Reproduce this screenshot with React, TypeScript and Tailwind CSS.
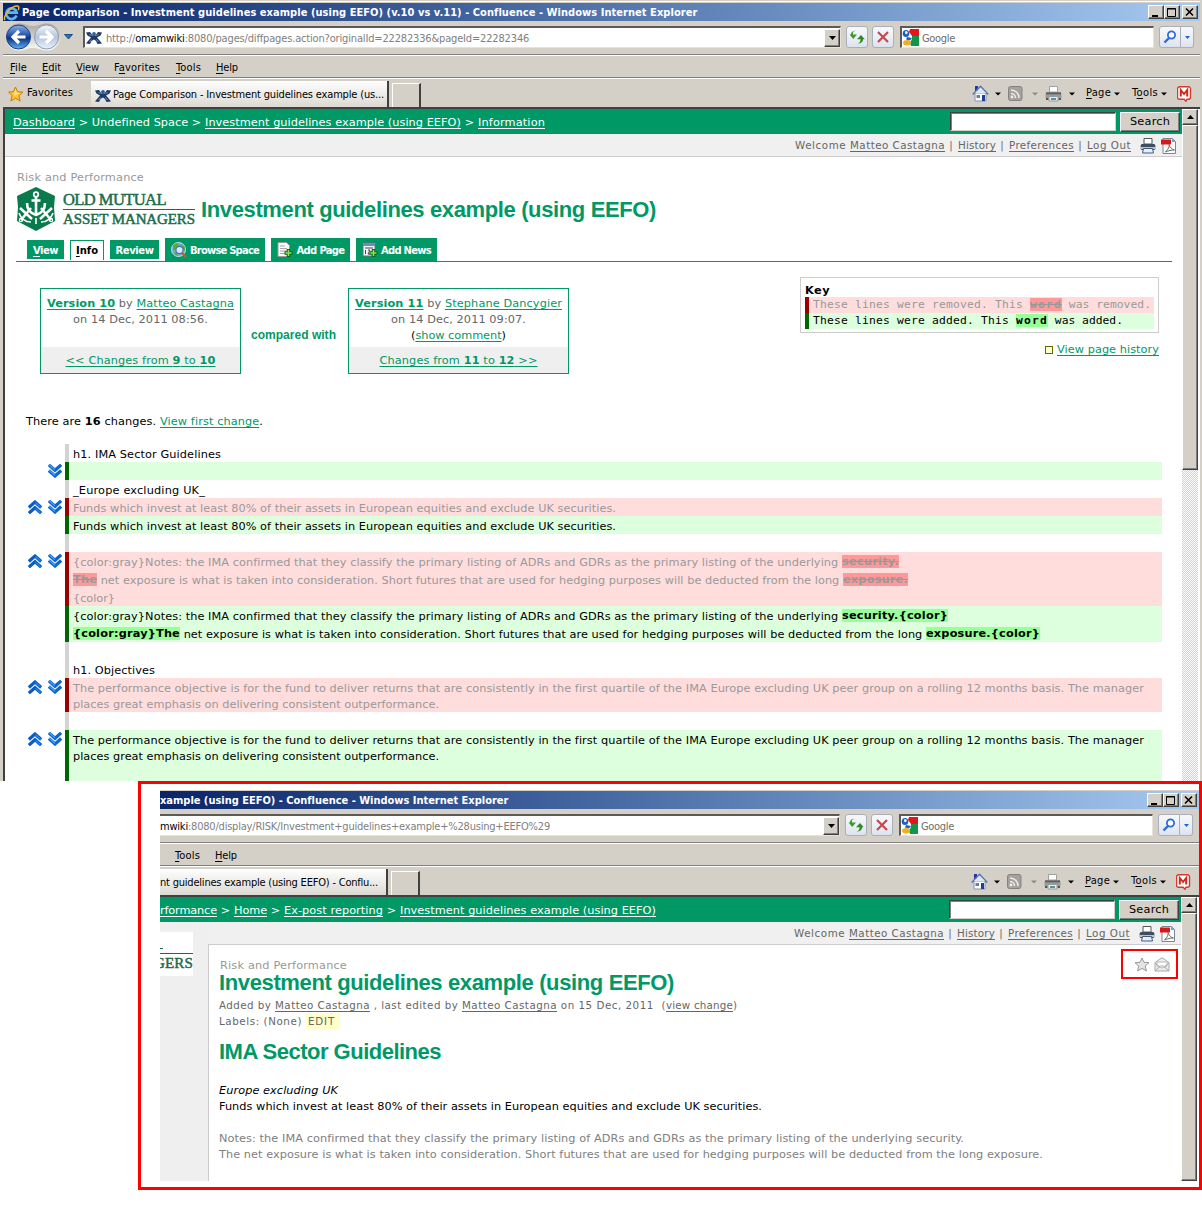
import { useLayoutEffect, useRef } from 'react';
import type { ReactNode } from 'react';
import clsx from 'clsx';

/** Text run tracked so that it fills exactly `w` pixels. */
function Fit({ w, className, children }: { w: number; className?: string; children: ReactNode }) {
  const ref = useRef<HTMLSpanElement>(null);
  useLayoutEffect(() => {
    const el = ref.current;
    if (!el) return;
    el.style.letterSpacing = '0px';
    const natural = el.getBoundingClientRect().width;
    const n = (el.textContent || '').length || 1;
    el.style.letterSpacing = `${(w - natural) / n}px`;
  }, [w]);
  return (
    <span ref={ref} className={clsx('inline-block shrink-0 whitespace-pre', className)}>
      {children}
    </span>
  );
}

const U = ({ children }: { children: ReactNode }) => <span className="underline underline-offset-2">{children}</span>;

/* ---------- icons ---------- */

function IeLogo() {
  return (
    <svg width="17" height="18" viewBox="0 0 17 18">
      <path d="M13.5 11.5A5.3 5.3 0 1 1 13.7 8.6H5" fill="none" stroke="#5db4f0" strokeWidth="2.7" />
      <path d="M2 16C-.5 13 8 1.500 14.500 2c2 .5 1.500 3 .5 4" fill="none" stroke="#f0b93a" strokeWidth="1.400" />
    </svg>
  );
}

function NavButtons() {
  return (
    <svg width="58" height="28" viewBox="0 0 58 28">
      <defs>
        <linearGradient id="nb" x1="0" y1="0" x2="0" y2="1">
          <stop offset="0" stopColor="#8fb2e6" />
          <stop offset=".45" stopColor="#1f4fae" />
          <stop offset=".55" stopColor="#0d3286" />
          <stop offset="1" stopColor="#5fb4f5" />
        </linearGradient>
        <linearGradient id="nf" x1="0" y1="0" x2="0" y2="1">
          <stop offset="0" stopColor="#f4f7fb" />
          <stop offset=".5" stopColor="#b4c4dc" />
          <stop offset="1" stopColor="#eaf4ff" />
        </linearGradient>
        <linearGradient id="np" x1="0" y1="0" x2="0" y2="1">
          <stop offset="0" stopColor="#a9a7a2" />
          <stop offset="1" stopColor="#fbfbfa" />
        </linearGradient>
      </defs>
      <path d="M14 .5C20 .500 22 3 28 3S36 .500 42 .500a13.500 13.500 0 0 1 0 27C36 27.500 34 25 28 25s-8 2.500-14 2.500a13.500 13.500 0 0 1 0-27z" fill="url(#np)" />
      <circle cx="13.500" cy="14" r="12" fill="url(#nb)" stroke="#1c3f80" />
      <circle cx="41.500" cy="14" r="12" fill="url(#nf)" stroke="#8f9bb0" />
      <path d="M20.500 14h-12M14 8l-6 6 6 6" fill="none" stroke="#fff" strokeWidth="3.200" />
      <path d="M34.500 14h12M41 8l6 6-6 6" fill="none" stroke="#fff" strokeWidth="3.200" />
    </svg>
  );
}

function SiteIcon() {
  return (
    <svg width="16" height="14" viewBox="0 0 16 14" className="shrink-0">
      <path d="M0 1.500L4 1l2.500 3.500h3L12 1l4 .5-1.500 3-3.500 2 3 3.500 2 2.500-4.500.5-1.500-3L8 8.500 5.500 10 4 13l-4-.5L2 10l3-3.500-3.500-2z" fill="#1d3a66" />
      <circle cx="8" cy="3" r="1.900" fill="#2f5c98" />
      <path d="M3.500 3l2 2M12.500 3l-2 2M3.500 11l2-2.500M12.500 11l-2-2.500" stroke="#8ea9cc" strokeWidth=".8" />
    </svg>
  );
}

function GoogleIcon() {
  return (
    <svg width="17" height="17" viewBox="0 0 17 17">
      <path d="M0 0h17v17H0z" fill="#fff" />
      <path d="M8 0h9v7H10L7 3z" fill="#e8141b" />
      <path d="M10 7h7v10H9l-1-3 2-4z" fill="#12964a" />
      <ellipse cx="4" cy="4.500" rx="3.300" ry="3.600" fill="#1e5fc4" />
      <ellipse cx="4.300" cy="3.600" rx="1.300" ry="1.700" fill="#fff" />
      <path d="M5 8l5 1-2 2.500-4-1z" fill="#1e5fc4" />
      <ellipse cx="5" cy="13.700" rx="4" ry="2.700" fill="#f2b01e" />
    </svg>
  );
}

function StarIcon() {
  return (
    <svg width="16" height="16" viewBox="0 0 16 16">
      <path d="M7.500 1l2 4.700 5.500.4-4.200 3.600L12.200 15l-4.700-2.800L2.800 15l1.400-5.300L.6 6.100l4.900-.4z" fill="#ffc62e" stroke="#c97a10" />
      <path d="M7.500 3l1.300 3.700 3.500.3-6.500 3z" fill="#ffe98a" />
    </svg>
  );
}

function HomeIcon() {
  return (
    <svg width="17" height="17" viewBox="0 0 17 17">
      <path d="M3 1h3v5H3z" fill="#2430b8" />
      <path d="M3 8h11v8H3z" fill="#fff" stroke="#8494ac" />
      <path d="M.7 9.500L8.500 1.500l7.800 8" fill="none" stroke="#5b76a8" strokeWidth="1.600" />
      <path d="M3 8l5.500-5.500L14 8z" fill="#dbe8f8" />
      <path d="M10 10h3v6h-3z" fill="#1c3f96" />
      <path d="M4.500 10H8v3H4.500z" fill="#6a7d9e" />
    </svg>
  );
}

function RssIcon() {
  return (
    <svg width="15" height="15" viewBox="0 0 15 15">
      <rect x=".5" y=".5" width="13.500" height="14" rx="2" fill="#a5a29d" stroke="#85827d" />
      <circle cx="4" cy="11" r="1.400" fill="#eee" />
      <path d="M3 7.500a4.500 4.500 0 0 1 4.500 4.500M3 4a8 8 0 0 1 8 8" fill="none" stroke="#eee" strokeWidth="1.500" />
    </svg>
  );
}

function PrinterIcon() {
  return (
    <svg width="17" height="16" viewBox="0 0 17 16">
      <path d="M4.500.5h8V6h-8z" fill="#fff" stroke="#a0a0a0" />
      <path d="M1.500 6h14l1 2v4H.5V8z" fill="#9a9a9a" />
      <path d="M1 6.500h15v1.800H1z" fill="#5e5e5e" />
      <path d="M1 12h2.500v2H1zM13.500 12H16v2h-2.500z" fill="#555" />
      <path d="M4 10.500h9V15H4z" fill="#e9eef4" stroke="#9b9b9b" />
      <path d="M6 12h3v2H6z" fill="#49a06b" />
      <path d="M9 12h2v2H9z" fill="#5a87cf" />
    </svg>
  );
}

function MIcon() {
  return (
    <svg width="15" height="16" viewBox="0 0 15 16">
      <path d="M2.500.8h9a2 2 0 0 1 2 2v8.500a2 2 0 0 1-2 2H10l-1 2-1.800-2H2.500a2 2 0 0 1-2-2V2.800a2 2 0 0 1 2-2z" fill="#fff" stroke="#d23a2a" strokeWidth="1.400" />
      <path d="M3.800 10.500V4l3.200 4 3.200-4v6.500" fill="none" stroke="#cf2a1d" strokeWidth="2" />
    </svg>
  );
}

function PagePrinter() {
  return (
    <svg width="16" height="16" viewBox="0 0 16 16">
      <path d="M4 .5h8V6H4z" fill="#fff" stroke="#555" />
      <rect x=".7" y="6" width="14.600" height="6" rx="1.500" fill="#3f4d5e" />
      <path d="M1 9h14v2H1z" fill="#b6c4d4" />
      <path d="M3.500 10.500h9l1 4.500h-11z" fill="#e6effa" stroke="#405a80" />
    </svg>
  );
}

function PdfIcon() {
  return (
    <svg width="16" height="16" viewBox="0 0 16 16">
      <path d="M2 .5h9.500l3 3V15.500H2z" fill="#fff" stroke="#7c8794" />
      <path d="M11 .5v3.500h3.500z" fill="#6aa3d0" />
      <path d="M0 1.500h10V6.500H0z" fill="#d81818" />
      <path d="M4.500 14c3-3 4-5 3.500-7.500 1 3 3 5 5.500 5.500-3 0-6 .7-9 2z" fill="none" stroke="#6c6c6c" />
    </svg>
  );
}

const Caret = ({ light = false }: { light?: boolean }) => (
  <svg width="6" height="4" viewBox="0 0 6 4" className="shrink-0">
    <path d="M0 .5h6L3 3.500z" fill={light ? '#8d8a84' : '#000'} />
  </svg>
);

function Crest() {
  return (
    <svg width="40" height="44" viewBox="0 0 40 44" className="shrink-0">
      <path d="M20 0l19 9-1 11 1 14-19 10L1 34l1-14L1 9z" fill="#087a4c" />
      <g fill="none" stroke="#fff">
        <circle cx="20" cy="7.500" r="2.300" strokeWidth="1.700" />
        <path d="M20 10v17M15.500 13.500h9" strokeWidth="2.600" />
        <path d="M11 16c0 7 4 10.500 9 12 5-1.500 9-5 9-12" strokeWidth="2.600" />
        <path d="M4 21l12 11M15 21L5 33M36 21L24 32M25 21l10 12" strokeWidth="2.500" />
        <path d="M3 26c2 6 7 9 12 9M37 26c-2 6-7 9-12 9M20 31v6" strokeWidth="1.600" />
        <circle cx="5" cy="33" r="1.600" strokeWidth="1.200" />
        <circle cx="35" cy="33" r="1.600" strokeWidth="1.200" />
      </g>
    </svg>
  );
}

const Up = () => (
  <svg width="14" height="14" viewBox="0 0 14 14">
    <path d="M.8 7.500L7 2l6.200 5.500M.8 13.200L7 7.700l6.200 5.500" fill="none" stroke="#0d5cc2" strokeWidth="3.200" />
    <path d="M7.500 2.500l5 4.500M7.500 8.200l5 4.500" fill="none" stroke="#1c86ea" strokeWidth="1.500" />
  </svg>
);
const Down = () => (
  <svg width="14" height="14" viewBox="0 0 14 14">
    <path d="M.8.8L7 6.300 13.200.8M.8 6.500L7 12l6.200-5.500" fill="none" stroke="#0d66d0" strokeWidth="3.200" />
    <path d="M1 .5L7 5.800M1 6.200l6 5.300" fill="none" stroke="#4aa0f2" strokeWidth="1.100" />
  </svg>
);

function BrowseIcon() {
  return (
    <svg width="16" height="16" viewBox="0 0 16 16">
      <circle cx="7.500" cy="7.500" r="7" fill="#7ba6dd" stroke="#c8dcf2" />
      <path d="M2 3l4-2 2 2-3 4-3 1zM10 2l4 3v4l-3-2zM3 10l3 1 1 3-3-1z" fill="#5ca83a" />
      <circle cx="8.500" cy="8" r="3.600" fill="#d6eafc" stroke="#3f6fb5" strokeWidth="1.200" />
      <path d="M11 11l4 4" stroke="#b5622a" strokeWidth="2.200" />
    </svg>
  );
}
function DocPlus({ news = false }: { news?: boolean }) {
  return (
    <svg width="16" height="16" viewBox="0 0 16 16">
      {news ? (
        <>
          <path d="M1 1h12v13H1z" fill="#f2f5fa" stroke="#5f7286" />
          <path d="M1 1h12v3H1z" fill="#6f8db5" />
          <path d="M3 6h8M3.500 8v4M6 8h2l-2 4h2" fill="none" stroke="#444" />
        </>
      ) : (
        <>
          <path d="M1 .5h8.500l3 3v11H1z" fill="#fafafa" stroke="#9a9a9a" />
          <path d="M3 4h5M3 6.500h7M3 9h7M3 11.500h5" stroke="#a8a8a8" />
        </>
      )}
      <path d="M11.500 7v8M7.500 11h8" stroke="#0b6b10" strokeWidth="3.600" />
      <path d="M11.500 8v6M8.500 11h6" stroke="#8ee05a" strokeWidth="1.500" />
    </svg>
  );
}

/* ---------- browser chrome ---------- */

const bevel = 'border border-t-white border-l-white border-r-[#404040] border-b-[#404040] bg-[#d4d0c8]';
const ctl = clsx(bevel, 'flex h-[14px] w-4 items-center justify-center shadow-[inset_-1px_-1px_0_#808080]');

function TitleBar({ children }: { children: ReactNode }) {
  return (
    <div className="flex h-[18px] items-center justify-between bg-linear-to-r from-[#0a246a] to-[#a6caf0] pr-0.5 text-[11px] leading-[18px] font-bold text-white">
      <div className="flex items-center pt-px">{children}</div>
      <div className="flex">
        <div className={ctl}>
          <svg width="12" height="11"><path d="M2 8h6v2H2z" /></svg>
        </div>
        <div className={ctl}>
          <svg width="12" height="11"><path d="M1.500 1.500h8v8h-8zM1 2h9" fill="none" stroke="#000" /></svg>
        </div>
        <div className={clsx(ctl, 'ml-0.5')}>
          <svg width="12" height="11"><path d="M2 1.500l7 7M9 1.500l-7 7" stroke="#000" strokeWidth="1.600" /></svg>
        </div>
      </div>
    </div>
  );
}

const softBtn = 'flex h-[22px] items-center justify-center rounded-[3px] border border-[#a9afbb] bg-linear-to-b from-[#f6f8fb] via-[#eceff5] to-[#dde3ee]';
const sunkenY = 'flex h-[22px] items-center border-t-2 border-t-[#5c5a57] border-r border-b border-r-[#e6e3dd] border-b-[#e6e3dd] bg-white';
const sunkenLeft = 'border-l-2 border-l-[#5c5a57]';

function AddressRow({ left, children }: { left?: ReactNode; children: ReactNode }) {
  return (
    <div className="flex h-[33px] items-center pr-1.5 pb-px text-[11px]">
      {left}
      <div className={clsx(sunkenY, 'min-w-0 flex-1', left && sunkenLeft)}>
        {children}
        <div className={clsx(bevel, 'ml-auto flex h-[18px] w-4 shrink-0 items-center justify-center shadow-[inset_-1px_-1px_0_#808080]')}>
          <svg width="7" height="4"><path d="M0 0h7L3.500 4z" /></svg>
        </div>
      </div>
      <div className={clsx(softBtn, 'ml-[5px] w-[22px]')}>
        <svg width="16" height="14" viewBox="0 0 16 14">
          <path d="M4 2v2.500h4L4.200 9 .5 4.500H2C2 2 3.500 1 7.500.5 5 1.300 4.200 1.800 4 2z" fill="#3d9a2b" />
          <path d="M12 5l3.800 4.300H14c0 2.500-1.500 4-5.500 4.400 2.500-1 3-2 3-4.400H8z" fill="#2f8a1f" />
        </svg>
      </div>
      <div className={clsx(softBtn, 'ml-1 w-[22px]')}>
        <svg width="12" height="12"><path d="M1 1l10 10M11 1L1 11" stroke="#c4484c" strokeWidth="2.200" /></svg>
      </div>
      <div className={clsx(sunkenY, sunkenLeft, 'ml-1.5 w-[254px]')}>
        <GoogleIcon />
        <Fit w={33} className="mt-[3px] ml-[3px] text-[#6d6d6d]">Google</Fit>
      </div>
      <div className={clsx(softBtn, 'ml-[5px] w-[22px] rounded-r-none')}>
        <svg width="14" height="14"><circle cx="8.500" cy="5" r="3.600" fill="#fff" stroke="#2a6be0" strokeWidth="1.800" /><path d="M6 8l-4.500 4.500" stroke="#2a6be0" strokeWidth="2.400" /></svg>
      </div>
      <div className={clsx(softBtn, 'w-[13px] rounded-l-none border-l-0')}>
        <svg width="5" height="3"><path d="M0 0h5L2.500 3z" fill="#1c62d8" /></svg>
      </div>
    </div>
  );
}

function MenuRow({ children }: { children: ReactNode }) {
  return (
    <div className="flex h-6 items-center border-t border-b border-[#808080] pt-[3px] text-[11px] leading-[18px] shadow-[inset_0_1px_0_#fff,0_1px_0_#fff]">
      {children}
    </div>
  );
}

function TabRow({ children }: { children: ReactNode }) {
  return (
    <div className="flex h-[29px] items-end justify-between pr-2 text-[11px]">
      {children}
      <div className="flex h-[29px] items-center pt-0.5">
        <HomeIcon />
        <span className="ml-1.5 flex"><Caret /></span>
        <span className="ml-[7px] flex"><RssIcon /></span>
        <span className="ml-[9px] flex"><Caret light /></span>
        <span className="ml-[7px] flex"><PrinterIcon /></span>
        <span className="ml-[7px] flex"><Caret /></span>
        <Fit w={25} className="ml-[11px]"><U>P</U>age</Fit>
        <span className="ml-[3px] flex"><Caret /></span>
        <Fit w={26} className="ml-3">T<U>o</U>ols</Fit>
        <span className="ml-[3px] flex"><Caret /></span>
        <span className="ml-2.5 flex"><MIcon /></span>
      </div>
    </div>
  );
}

const EmptyTab = () => <div className="ml-[3px] h-6 w-[29px] border-t border-r-2 border-l border-t-white border-r-[#404040] border-l-white" />;

function Crumbs({ children }: { children: ReactNode }) {
  return (
    <div className="flex h-[25px] shrink-0 items-center bg-[#009966] pt-0.5 pr-0.5 font-[DejaVu_Sans,sans-serif] text-[11.3px] leading-[23px] text-white">
      {children}
      <div className="-mt-0.5 ml-auto h-[19px] w-[166px] border border-t-[#404040] border-r-[#d4d0c8] border-b-[#d4d0c8] border-l-[#404040] bg-white shadow-[inset_1px_1px_0_#808080]" />
      <div className={clsx(bevel, '-mt-0.5 ml-1 flex h-5 w-[60px] items-center justify-center text-black shadow-[inset_-1px_-1px_0_#808080]')}>
        <Fit w={40} className="leading-[18px]">Search</Fit>
      </div>
    </div>
  );
}

function UserBar() {
  return (
    <div className="flex h-[23px] shrink-0 items-center justify-end border-b border-[#cccccc] bg-[#f0f0f0] pt-px pr-[5px] text-[10.3px] leading-[21px] text-[#666666]">
      <Fit w={55}>{'Welcome '}</Fit>
      <Fit w={95} className="underline underline-offset-2">Matteo Castagna</Fit>
      <Fit w={13}>{' | '}</Fit>
      <Fit w={38} className="underline underline-offset-2">History</Fit>
      <Fit w={13}>{' | '}</Fit>
      <Fit w={65} className="underline underline-offset-2">Preferences</Fit>
      <Fit w={13}>{' | '}</Fit>
      <Fit w={44} className="underline underline-offset-2">Log Out</Fit>
      <span className="ml-[9px] flex"><PagePrinter /></span>
      <span className="ml-[5px] flex"><PdfIcon /></span>
    </div>
  );
}

function Scrollbar({ thumb }: { thumb: string }) {
  return (
    <div className="flex w-4 shrink-0 flex-col bg-[conic-gradient(#fff_25%,#d4d0c8_0_50%,#fff_0_75%,#d4d0c8_0)] bg-size-[2px_2px]">
      <div className={clsx(bevel, 'flex h-4 items-center justify-center shadow-[inset_-1px_-1px_0_#808080]')}>
        <svg width="7" height="4"><path d="M0 4h7L3.500 0z" /></svg>
      </div>
      <div className={clsx(bevel, 'shadow-[inset_-1px_-1px_0_#808080]', thumb)} />
    </div>
  );
}

/* ---------- diff ---------- */

type Kind = 'same' | 'del' | 'add';
const bar: Record<Kind, string> = {
  same: 'border-[#d3d3d3] text-black',
  del: 'border-[#990000] bg-[#ffdddd] text-[#999999]',
  add: 'border-[#006600] bg-[#ddffdd] text-black',
};

function DiffRow({ kind, nav = '', className = 'min-h-[18px]', children }: { kind: Kind; nav?: string; className?: string; children?: ReactNode }) {
  return (
    <div className="flex">
      <div className="flex w-[37px] gap-1.5 pt-0.5">
        <span className="h-3.5 w-3.5">{nav.includes('u') && <Up />}</span>
        <span className="h-3.5 w-3.5">{nav.includes('d') && <Down />}</span>
      </div>
      <div className={clsx('flex flex-1 flex-col border-l-4 pl-1', bar[kind], className)}>{children}</div>
    </div>
  );
}

const Del = ({ w, className, children }: { w: number; className?: string; children: ReactNode }) => (
  <Fit w={w} className={clsx('bg-[#ff9999] leading-[13px] font-bold line-through', className)}>{children}</Fit>
);
const Add = ({ w, className, children }: { w: number; className?: string; children: ReactNode }) => (
  <Fit w={w} className={clsx('bg-[#99ff99] leading-[13px] font-bold text-black', className)}>{children}</Fit>
);
const Line = ({ children }: { children: ReactNode }) => <div className="flex h-[18px] items-end leading-[15px]">{children}</div>;

const notes = '{color:gray}Notes: the IMA confirmed that they classify the primary listing of ADRs and GDRs as the primary listing of the underlying ';
const net = ' net exposure is what is taken into consideration. Short futures that are used for hedging purposes will be deducted from the long ';
const funds = 'Funds which invest at least 80% of their assets in European equities and exclude UK securities.';
const perf = 'The performance objective is for the fund to deliver returns that are consistently in the first quartile of the IMA Europe excluding UK peer group on a rolling 12 months basis. The manager';
const perf2 = 'places great emphasis on delivering consistent outperformance.';

const link = 'text-[#009966] underline underline-offset-2';

function VersionBox({ width, head, foot }: { width: string; head: ReactNode; foot: ReactNode }) {
  return (
    <div className={clsx('flex h-[86px] flex-col border border-[#009966] text-center text-[#666666]', width)}>
      <div className="flex h-[58px] flex-col items-center pt-[7px] leading-4">{head}</div>
      <div className="flex-1 bg-[#efefef] pt-1 leading-[20px]">{foot}</div>
    </div>
  );
}

const tab = 'flex items-center justify-center bg-[#009966] text-white';

function ComparisonPage() {
  return (
    <div className="flex flex-1 flex-col pl-[11px]">
      <Fit w={127} className="mt-[13px] ml-px self-start leading-4 text-[#999999]">Risk and Performance</Fit>
      <div className="mt-px flex h-11 items-center">
        <Crest />
        <div className="ml-[7px] flex flex-col items-start font-[Liberation_Serif,serif] text-[16.5px] text-[#1d6c4b]">
          <Fit w={103} className="leading-[18px] [-webkit-text-stroke:0.5px]">OLD MUTUAL</Fit>
          <div className="h-px w-[132px] bg-[#1d6c4b]" />
          <Fit w={132} className="text-[15px] leading-[18px] [-webkit-text-stroke:0.5px]">ASSET MANAGERS</Fit>
        </div>
        <Fit w={455} className="mt-0.5 ml-[6px] font-[Liberation_Sans,sans-serif] text-[22px] leading-[42px] font-bold text-[#009966]">
          Investment guidelines example (using EEFO)
        </Fit>
      </div>
      <div className="mt-[7px] mr-2.5 flex h-6 border-b border-[#009966] pl-[11px] text-[10px] font-bold">
        <div className={clsx(tab, 'mt-0.5 h-[19px] w-[37px] pt-0.5')}><Fit w={25}><U>V</U>iew</Fit></div>
        <div className="mt-0.5 ml-1.5 flex h-5 w-[34px] items-center justify-center border border-b-0 border-[#009966] text-black"><Fit w={22}><U>I</U>nfo</Fit></div>
        <div className={clsx(tab, 'mt-0.5 ml-1.5 h-[19px] w-[49px] pt-0.5')}><Fit w={38}>Review</Fit></div>
        <div className={clsx(tab, 'ml-1.5 w-[100px] gap-[3px] pt-px')}><BrowseIcon /><Fit w={69}>Browse Space</Fit></div>
        <div className={clsx(tab, 'ml-1.5 w-[79px] gap-1 pt-px')}><DocPlus /><Fit w={48}>Add Page</Fit></div>
        <div className={clsx(tab, 'ml-1.5 w-[81px] gap-[3px] pt-px')}><DocPlus news /><Fit w={50}>Add News</Fit></div>
      </div>
      <div className="mt-[15px] flex h-[136px] items-start pr-[23px]">
        <div className="mt-[11px] ml-6 flex items-start">
          <VersionBox
            width="w-[201px]"
            head={
              <>
                <Fit w={187}><b className={link}>Version 10</b> by <span className={link}>Matteo Castagna</span></Fit>
                <Fit w={135}>on 14 Dec, 2011 08:56.</Fit>
              </>
            }
            foot={<Fit w={150} className={link}>{'<< Changes from '}<b>9</b> to <b>10</b></Fit>}
          />
          <Fit w={85} className="mt-[39px] mr-3 ml-2.5 font-[Liberation_Sans,sans-serif] text-[12px] leading-4 font-bold text-[#009966]">compared with</Fit>
          <VersionBox
            width="w-[221px]"
            head={
              <>
                <Fit w={207}><b className={link}>Version 11</b> by <span className={link}>Stephane Dancygier</span></Fit>
                <Fit w={135}>on 14 Dec, 2011 09:07.</Fit>
                <Fit w={95} className="text-black">(<span className={link}>show comment</span>)</Fit>
              </>
            }
            foot={<Fit w={158} className={link}>Changes from <b>11</b> to <b>12</b>{' >>'}</Fit>}
          />
        </div>
        <div className="ml-auto flex w-[359px] flex-col">
          <div className="h-14 border border-[#cccccc] px-1 pt-[5px]">
            <div className="h-3.5 leading-4 font-bold"><Fit w={25}>Key</Fit></div>
            <div className="flex h-4 items-center border-l-4 border-[#990000] bg-[#ffdddd] pb-0.5 pl-1 font-[DejaVu_Sans_Mono,monospace] leading-[13px] text-[#999999]">
              <Fit w={217}>{'These lines were removed. This '}</Fit>
              <Del w={32}>word</Del>
              <Fit w={89}>{' was removed.'}</Fit>
            </div>
            <div className="flex h-4 items-center border-l-4 border-[#006600] bg-[#ddffdd] pb-0.5 pl-1 font-[DejaVu_Sans_Mono,monospace] leading-[13px]">
              <Fit w={203}>{'These lines were added. This '}</Fit>
              <Add w={32}>word</Add>
              <Fit w={75}>{' was added.'}</Fit>
            </div>
          </div>
          <div className="mt-[9px] flex items-center justify-end gap-1 leading-4">
            <div className="h-2 w-2 border border-[#666600] bg-[#ffffcc]" />
            <Fit w={102} className={link}>View page history</Fit>
          </div>
        </div>
      </div>
      <Fit w={237} className="mt-px ml-2.5 self-start leading-4">
        There are <b>16</b> changes. <span className={link}>View first change</span>.
      </Fit>
      <div className="mt-3.5 mr-5 ml-3 flex flex-col">
        <DiffRow kind="same"><Line><Fit w={148}>h1. IMA Sector Guidelines</Fit></Line></DiffRow>
        <DiffRow kind="add" nav="d" />
        <DiffRow kind="same"><Line><Fit w={132}>_Europe excluding UK_</Fit></Line></DiffRow>
        <DiffRow kind="del" nav="ud"><Line><Fit w={543}>{funds}</Fit></Line></DiffRow>
        <DiffRow kind="add"><Line><Fit w={543}>{funds}</Fit></Line></DiffRow>
        <DiffRow kind="same" />
        <DiffRow kind="del" nav="ud">
          <Line><Fit w={769}>{notes}</Fit><Del w={57} className="mb-0.5">security.</Del></Line>
          <Line><Del w={24} className="mb-0.5">The</Del><Fit w={746}>{net}</Fit><Del w={65} className="mb-0.5">exposure.</Del></Line>
          <Line><Fit w={42}>{'{color}'}</Fit></Line>
        </DiffRow>
        <DiffRow kind="add">
          <Line><Fit w={769}>{notes}</Fit><Add w={106} className="mb-0.5">{'security.{color}'}</Add></Line>
          <Line><Add w={107} className="mb-0.5">{'{color:gray}The'}</Add><Fit w={746}>{net}</Fit><Add w={114} className="mb-0.5">{'exposure.{color}'}</Add></Line>
        </DiffRow>
        <DiffRow kind="same" />
        <DiffRow kind="same"><Line><Fit w={82}>h1. Objectives</Fit></Line></DiffRow>
        <DiffRow kind="del" nav="ud" className="h-[34px] items-start pt-[3px] leading-4"><Fit w={1071}>{perf}</Fit><Fit w={366}>{perf2}</Fit></DiffRow>
        <DiffRow kind="same" />
        <DiffRow kind="add" nav="ud" className="h-[60px] items-start pt-[3px] leading-4"><Fit w={1071}>{perf}</Fit><Fit w={366}>{perf2}</Fit></DiffRow>
      </div>
    </div>
  );
}

function ArticlePage() {
  return (
    <div className="flex flex-1">
      <div className="-mt-[23px] w-12 shrink-0 bg-[#efefef] pt-2.5">
        <div className="flex h-11 w-[33px] flex-col items-start overflow-hidden bg-white pt-4 font-[Liberation_Serif,serif] text-[15px] text-[#1d6c4b]">
          <div className="h-px w-[3px] bg-[#1d6c4b]" />
          <div className="mt-1 h-px w-full bg-[#1d6c4b]" />
          <Fit w={39} className="-ml-1.5 leading-[19px] [-webkit-text-stroke:0.5px]">GERS</Fit>
        </div>
      </div>
      <div className="flex flex-1 flex-col items-start border-l border-[#cccccc] bg-white pl-2.5">
        <div className="flex w-full items-start justify-between pr-[3px]">
          <div className="flex flex-col items-start">
            <Fit w={127} className="mt-[13px] ml-px leading-4 text-[#999999]">Risk and Performance</Fit>
            <Fit w={455} className="-mt-[3px] font-[Liberation_Sans,sans-serif] text-[22px] leading-6 font-bold text-[#009966]">
              Investment guidelines example (using EEFO)
            </Fit>
          </div>
          <div className="mt-1 flex h-[30px] w-[57px] items-center gap-1 border-2 border-[#ff0000] pl-[11px]">
            <svg width="16" height="15" viewBox="0 0 16 15">
              <path d="M8 1l2 4.300 5 .4-3.800 3.300L12.500 14 8 11.400 3.500 14l1.300-5L1 5.700l5-.4z" fill="#e4e4e4" stroke="#999" />
            </svg>
            <svg width="16" height="15" viewBox="0 0 16 15">
              <path d="M1 5.500L8 .7l7 4.800V14H1z" fill="#ececec" stroke="#aaa" />
              <path d="M3 5h10v4l-5 2-5-2z" fill="#fff" stroke="#bbb" />
              <path d="M1 14l5.500-5h3L15 14M1 6l5 4M15 6l-5 4" fill="none" stroke="#aaa" />
            </svg>
          </div>
        </div>
        <div className="mt-0.5 flex text-[10.3px] leading-4 text-[#666666]">
          <Fit w={56}>{'Added by '}</Fit>
          <Fit w={95} className="underline underline-offset-2">Matteo Castagna</Fit>
          <Fit w={92}>{' , last edited by '}</Fit>
          <Fit w={95} className="underline underline-offset-2">Matteo Castagna</Fit>
          <Fit w={109}>{' on 15 Dec, 2011  ('}</Fit>
          <Fit w={67} className="underline underline-offset-2">view change</Fit>
          <Fit w={5}>)</Fit>
        </div>
        <div className="flex text-[10.3px] leading-4 text-[#666666]">
          <Fit w={83}>Labels: (None)</Fit>
          <div className="ml-1 h-4 w-[34px] bg-[#ffffcc] pl-0.5"><Fit w={27}>EDIT</Fit></div>
        </div>
        <Fit w={222} className="mt-[11px] font-[Liberation_Sans,sans-serif] text-[22px] leading-6 font-bold text-[#009966]">IMA Sector Guidelines</Fit>
        <Fit w={119} className="mt-[19px] leading-4 italic">Europe excluding UK</Fit>
        <Fit w={543} className="leading-4">{funds}</Fit>
        <Fit w={745} className="mt-4 leading-4 text-[#808080]">
          Notes: the IMA confirmed that they classify the primary listing of ADRs and GDRs as the primary listing of the underlying security.
        </Fit>
        <Fit w={824} className="leading-4 text-[#808080]">
          The net exposure is what is taken into consideration. Short futures that are used for hedging purposes will be deducted from the long exposure.
        </Fit>
      </div>
    </div>
  );
}

const tabShape = 'flex h-[26px] items-center border-r-2 border-[#404040] bg-linear-to-b from-white to-[#dcd9d2] pt-[3px]';

export default function App() {
  return (
    <div className="flex h-[1210px] w-[1202px] flex-col overflow-hidden bg-white font-[DejaVu_Sans_Condensed,DejaVu_Sans,sans-serif] text-[11px] text-black">
      <div className="flex h-[781px] shrink-0 flex-col overflow-hidden border-t border-[#d4d0c8] bg-[#d4d0c8] pr-0.5">
        <div className="h-px shrink-0 bg-white" />
        <div className="mt-px flex flex-col pl-[3px]">
          <TitleBar>
            <IeLogo />
            <Fit w={675} className="ml-0.5">Page Comparison - Investment guidelines example (using EEFO) (v.10 vs v.11) - Confluence - Windows Internet Explorer</Fit>
          </TitleBar>
          <AddressRow
            left={
              <>
                <span className="ml-0.5 flex"><NavButtons /></span>
                <svg width="9" height="6" className="mr-2.5 ml-px"><path d="M.5.5h8L4.500 5z" fill="#2d6fae" stroke="#1d4f85" /></svg>
              </>
            }
          >
            <span className="ml-px flex"><SiteIcon /></span>
            <Fit w={423} className="mt-[3px] ml-1 text-[#808080]">
              http://<span className="text-black">omamwiki</span>:8080/pages/diffpages.action?originalId=22282336&amp;pageId=22282346
            </Fit>
          </AddressRow>
          <MenuRow>
            <Fit w={17} className="ml-[7px]"><U>F</U>ile</Fit>
            <Fit w={19} className="ml-[15px]"><U>E</U>dit</Fit>
            <Fit w={23} className="ml-[15px]"><U>V</U>iew</Fit>
            <Fit w={46} className="ml-[15px]">F<U>a</U>vorites</Fit>
            <Fit w={25} className="ml-4"><U>T</U>ools</Fit>
            <Fit w={22} className="ml-[15px]"><U>H</U>elp</Fit>
          </MenuRow>
          <TabRow>
            <div className="flex h-[29px] items-end">
              <div className="flex h-[29px] items-center gap-[3px] pt-0.5 pl-[5px]">
                <StarIcon />
                <Fit w={46}>Favorites</Fit>
              </div>
              <div className={clsx(tabShape, 'ml-[18px] w-[298px] pl-1')}>
                <SiteIcon />
                <Fit w={271} className="ml-0.5">Page Comparison - Investment guidelines example (us...</Fit>
              </div>
              <EmptyTab />
            </div>
          </TabRow>
        </div>
        <div className="ml-[3px] flex flex-1 border-t-2 border-l-2 border-[#404040] bg-white pr-0.5">
          <div className="flex min-w-0 flex-1 flex-col font-[DejaVu_Sans,sans-serif] text-[11.3px]">
            <Crumbs>
              <Fit w={62} className="ml-2 underline underline-offset-2">Dashboard</Fit>
              <Fit w={130}>{' > Undefined Space > '}</Fit>
              <Fit w={256} className="underline underline-offset-2">Investment guidelines example (using EEFO)</Fit>
              <Fit w={17}>{' > '}</Fit>
              <Fit w={67} className="underline underline-offset-2">Information</Fit>
            </Crumbs>
            <UserBar />
            <ComparisonPage />
          </div>
          <Scrollbar thumb="h-[345px]" />
        </div>
      </div>
      <div className="ml-[138px] h-[409px] shrink-0 border-3 border-[#ff0000] pt-1.5 pl-[19px]">
        <div className="flex h-[391px] flex-col overflow-hidden bg-[#d4d0c8] pt-px">
          <TitleBar>
            <Fit w={348}>xample (using EEFO) - Confluence - Windows Internet Explorer</Fit>
          </TitleBar>
          <AddressRow>
            <Fit w={390} className="mt-[3px] text-[#808080]">
              <span className="text-black">mwiki</span>:8080/display/RISK/Investment+guidelines+example+%28using+EEFO%29
            </Fit>
          </AddressRow>
          <MenuRow>
            <Fit w={25} className="ml-[15px]"><U>T</U>ools</Fit>
            <Fit w={22} className="ml-[15px]"><U>H</U>elp</Fit>
          </MenuRow>
          <TabRow>
            <div className="flex items-end">
              <div className={clsx(tabShape, 'w-[228px]')}>
                <Fit w={218}>nt guidelines example (using EEFO) - Conflu...</Fit>
              </div>
              <EmptyTab />
            </div>
          </TabRow>
          <div className="flex flex-1 border-t-2 border-[#404040] bg-white pr-0.5">
            <div className="flex min-w-0 flex-1 flex-col font-[DejaVu_Sans,sans-serif] text-[11.3px]">
              <Crumbs>
                <Fit w={57} className="underline underline-offset-2">rformance</Fit>
                <Fit w={17}>{' > '}</Fit>
                <Fit w={33} className="underline underline-offset-2">Home</Fit>
                <Fit w={17}>{' > '}</Fit>
                <Fit w={99} className="underline underline-offset-2">Ex-post reporting</Fit>
                <Fit w={17}>{' > '}</Fit>
                <Fit w={256} className="underline underline-offset-2">Investment guidelines example (using EEFO)</Fit>
              </Crumbs>
              <UserBar />
              <ArticlePage />
            </div>
            <Scrollbar thumb="flex-1" />
          </div>
        </div>
      </div>
    </div>
  );
}
